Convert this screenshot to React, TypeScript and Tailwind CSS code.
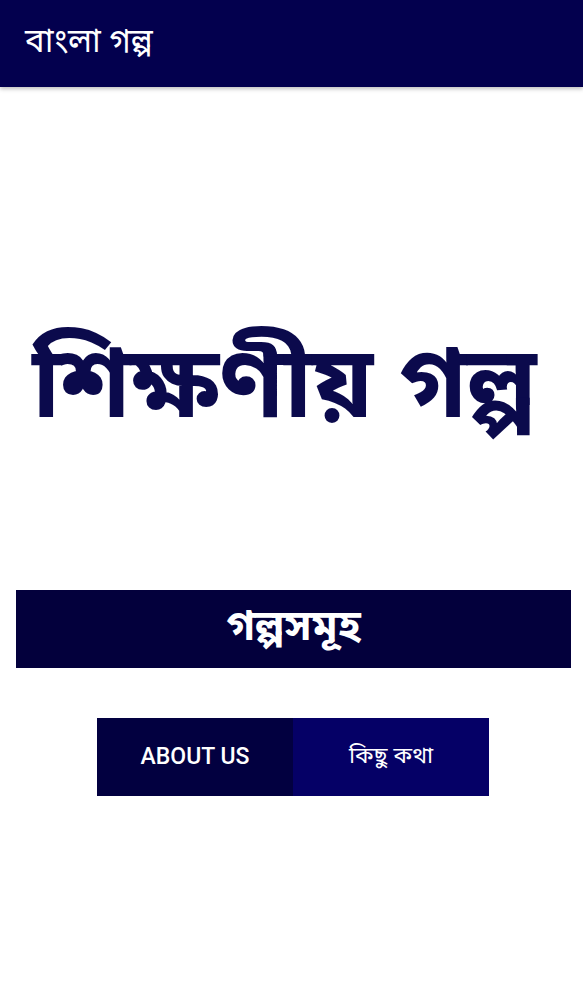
import React from 'react';

const bn = "font-['Noto_Sans_Bengali','Noto_Sans','DejaVu_Sans',sans-serif]";

export default function App() {
  return (
    <div className="min-h-[1000px] bg-white">
      <header className="flex h-[87px] items-center bg-[#03004e] px-[25px] shadow-[0_2px_4px_rgba(0,0,0,0.25)]">
        <h1 className={`${bn} text-[33px] leading-none text-white`}>বাংলা গল্প</h1>
      </header>

      <div className="flex h-[503px] items-center justify-center pt-[106px] pr-[14px]">
        <div className={`${bn} text-[99px] font-bold leading-none text-[#0b0a4c]`}>শিক্ষণীয় গল্প</div>
      </div>

      <div className="ml-4 mr-3">
        <button
          type="button"
          className={`${bn} flex h-[78px] w-full items-center justify-center bg-[#03003c] text-[42px] font-bold leading-none text-white`}
        >
          গল্পসমূহ
        </button>
      </div>

      <div className="mt-[50px] flex justify-center pl-[3px]">
        <div className="flex h-[78px] w-[392px]">
          <button
            type="button"
            className="flex flex-1 items-center justify-center bg-[#020040] font-['Roboto',sans-serif] text-[23px] font-medium text-white"
          >
            ABOUT US
          </button>
          <button
            type="button"
            className={`${bn} flex flex-1 items-center justify-center bg-[#050066] text-[23px] text-white`}
          >
            কিছু কথা
          </button>
        </div>
      </div>
    </div>
  );
}
